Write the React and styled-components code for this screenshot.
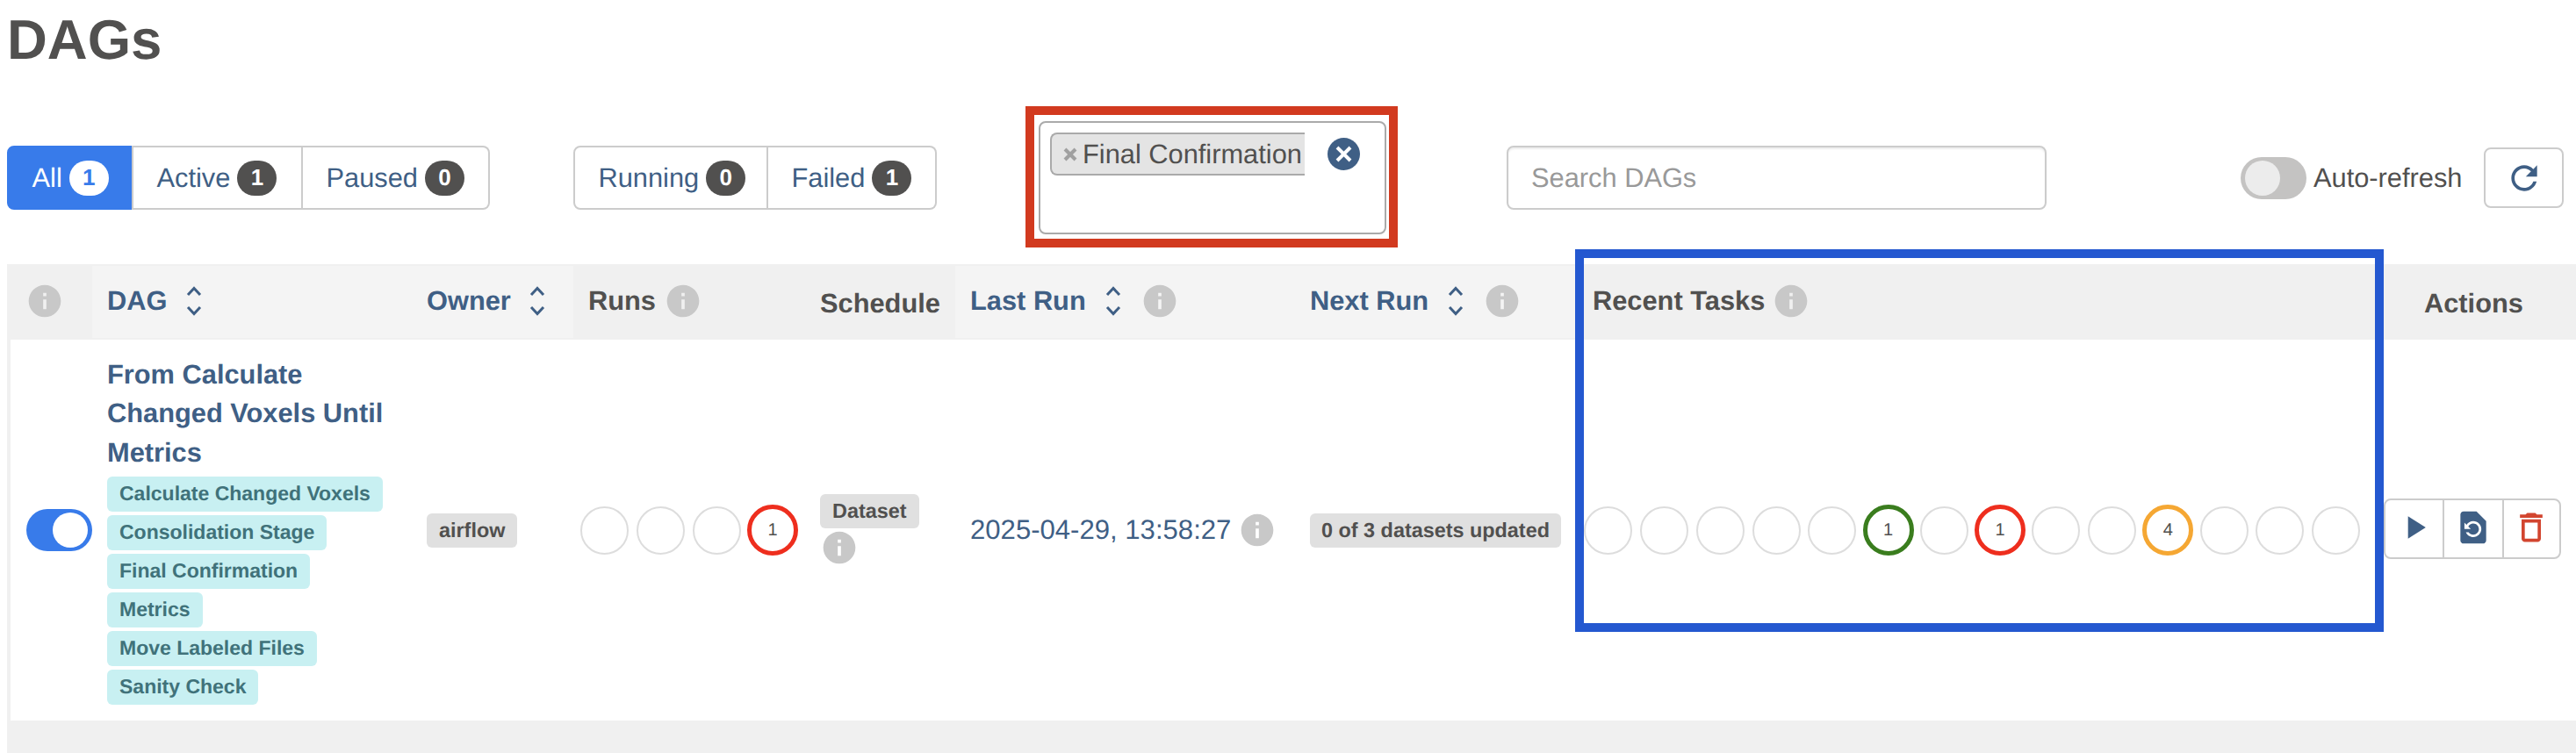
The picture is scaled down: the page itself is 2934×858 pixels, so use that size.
import styled, { createGlobalStyle } from "styled-components";

const INK = "#51504f";
const NAVY = "#3f5f85";
const COLUMNS = "97px 364px 184px 263px 172px 387px 320px 920px 219px";

const GlobalStyle = createGlobalStyle`
  html, body {
    margin: 0;
    background: #fff;
    overflow: hidden;
  }
  * {
    box-sizing: border-box;
  }
`;

const Page = styled.div`
  height: 858px;
  padding-left: 8px;
  overflow: hidden;
  color: ${INK};
  font-family: "Liberation Sans", Arial, sans-serif;
  font-size: 30.8px;
  text-rendering: geometricPrecision;
`;

const Title = styled.h1`
  height: 121px;
  margin: 0;
  padding-top: 14px;
  font-size: 63.5px;
  line-height: 64px;
  font-weight: 700;
`;

const Toolbar = styled.div`
  display: flex;
  align-items: center;
  height: 163px;
  margin-bottom: 17px;
`;

const ButtonGroup = styled.div`
  display: flex;
  height: 73px;
  margin-left: ${(p) => p.$offset || 0}px;
`;

const FilterButton = styled.div`
  display: flex;
  align-items: center;
  gap: 8px;
  width: ${(p) => p.$width}px;
  padding-left: 26.5px;
  color: ${(p) => (p.$active ? "#fff" : NAVY)};
  background: ${(p) => (p.$active ? "#387bea" : "#fff")};
  border: 2px solid ${(p) => (p.$active ? "#387bea" : "#ccc")};
  border-left-width: ${(p) => (p.$first || p.$afterActive ? 2 : 0)}px;
  border-radius: ${(p) => (p.$first ? "8px 0 0 8px" : p.$last ? "0 8px 8px 0" : "0")};
`;

const CountBadge = styled.span`
  display: flex;
  align-items: center;
  justify-content: center;
  width: 45px;
  height: 40px;
  border-radius: 20px;
  font-size: 26px;
  font-weight: 700;
  color: ${(p) => (p.$active ? "#387bea" : "#fff")};
  background: ${(p) => (p.$active ? "#fff" : INK)};
`;

const FilterOutline = styled.div`
  width: 424px;
  height: 161px;
  margin: -2px 0 0 101px;
  padding: 7px 3px 5px 5px;
  border: 10px solid #d23a1f;
`;

const TagSelect = styled.div`
  display: flex;
  align-items: flex-start;
  height: 129px;
  padding: 11px 0 0 11px;
  border: 2px solid #aaa;
  border-radius: 8px;
`;

const SelectedTag = styled.div`
  display: flex;
  align-items: center;
  width: 290px;
  height: 49px;
  padding-left: 13px;
  overflow: hidden;
  white-space: nowrap;
  background: #e4e4e4;
  border: 2px solid #aaa;
  border-right: 0;
  border-radius: 8px 0 0 8px;
`;

const TagRemove = styled.svg`
  flex: none;
  width: 16px;
  height: 16px;
  margin-right: 6px;
  stroke: #a0a0a0;
  stroke-width: 4;
`;

const ClearButton = styled.svg`
  flex: none;
  width: 37px;
  height: 37px;
  margin: 6px 0 0 26px;
`;

const SearchInput = styled.div`
  display: flex;
  align-items: center;
  width: 615px;
  height: 73px;
  margin-left: 124px;
  padding-left: 26px;
  color: #999;
  border: 2px solid #ccc;
  border-radius: 8px;
  box-shadow: inset 0 2px 2px rgba(0, 0, 0, 0.07);
`;

const Switch = styled.div`
  display: flex;
  align-items: center;
  justify-content: ${(p) => (p.$on ? "flex-end" : "flex-start")};
  flex: none;
  width: 75px;
  height: 48px;
  padding: 4px 5px;
  background: ${(p) => (p.$on ? "#387bea" : "#c4c3c2")};
  border-radius: 24px;
`;

const SwitchKnob = styled.span`
  width: 40px;
  height: 40px;
  border-radius: 50%;
  background: ${(p) => (p.$on ? "#fff" : "#ececec")};
`;

const AutoRefresh = styled.div`
  display: flex;
  align-items: center;
  gap: 8px;
  margin-left: 221px;
`;

const RefreshButton = styled.div`
  display: flex;
  align-items: center;
  justify-content: center;
  width: 91px;
  height: 69px;
  margin-left: 25px;
  border: 2px solid #ccc;
  border-radius: 8px;
`;

const TableWrap = styled.div`
  position: relative;
`;

const HeaderRow = styled.div`
  display: grid;
  grid-template-columns: ${COLUMNS};
  height: 86px;
  padding: 2px 0;
  background: #f0f0f0;
`;

const HeaderCell = styled.div`
  display: flex;
  align-items: center;
  padding: ${(p) => (p.$plain ? "4px 0 0" : "0 0 2px")};
  padding-left: ${(p) => p.$left}px;
  font-weight: 700;
  white-space: nowrap;
  color: ${(p) => (p.$sort ? NAVY : INK)};
  background: ${(p) => (p.$light ? "#f4f4f4" : "transparent")};
`;

const SortIcon = styled.svg`
  flex: none;
  width: 18px;
  height: 34px;
  margin-left: ${(p) => p.$gap}px;
  fill: none;
  stroke: ${NAVY};
  stroke-width: 3;
`;

const InfoIcon = styled.svg`
  flex: none;
  display: block;
  width: 44px;
  height: 44px;
  margin-left: ${(p) => p.$gap || 0}px;
  fill: #c8c8c8;
`;

const BodyRow = styled.div`
  display: grid;
  grid-template-columns: ${COLUMNS};
  align-items: center;
  height: 434px;
  background: #fff;
  box-shadow: inset 4px 0 0 #f0f0f0;
`;

const BodyCell = styled.div`
  padding-left: ${(p) => p.$left || 0}px;
`;

const DagName = styled.div`
  width: 330px;
  margin-bottom: 5px;
  font-weight: 700;
  line-height: 44.5px;
  color: ${NAVY};
`;

const TagList = styled.div`
  display: flex;
  flex-direction: column;
  align-items: flex-start;
  gap: 4px;
`;

const DagTag = styled.span`
  height: 40px;
  padding: 0 14px;
  font-size: 23px;
  font-weight: 700;
  line-height: 39px;
  white-space: nowrap;
  color: #40727a;
  background: #c8f0f2;
  border-radius: 6px;
`;

const GreyLabel = styled.span`
  display: inline-block;
  height: 39px;
  padding: 0 ${(p) => p.$pad || 14}px;
  font-size: 23.4px;
  font-weight: 700;
  line-height: 39px;
  white-space: nowrap;
  background: #e0e0e0;
  border-radius: 6px;
`;

const LastRun = styled.div`
  display: flex;
  align-items: center;
  gap: 8px;
  font-size: 31.1px;
  white-space: nowrap;
  color: ${NAVY};
`;

const CircleRow = styled.div`
  display: flex;
`;

const CircleSlot = styled.div`
  display: flex;
  align-items: center;
  justify-content: center;
  flex: none;
  width: 63.75px;
`;

const StateCircle = styled.div`
  display: flex;
  align-items: center;
  justify-content: center;
  width: ${(p) => (p.$color ? 58 : 55)}px;
  height: ${(p) => (p.$color ? 58 : 55)}px;
  font-size: 20px;
  border: ${(p) => (p.$color ? `5px solid ${p.$color}` : "2.5px solid #ddd")};
  border-radius: 50%;
`;

const ActionGroup = styled.div`
  display: flex;
  width: 202px;
  height: 69px;
  margin-top: -4px;
  border: 2px solid #ccc;
  border-radius: 8px;
`;

const ActionButton = styled.div`
  display: flex;
  align-items: center;
  justify-content: center;
  width: ${(p) => p.$width}px;
  padding-bottom: 3px;
  border-left: ${(p) => (p.$divider ? "2px solid #ccc" : "0")};
`;

const ActionIcon = styled.svg`
  display: block;
  width: 44px;
  height: 44px;
  fill: ${(p) => p.$color};
`;

const TableFooter = styled.div`
  height: 37px;
  background: #f0f0f0;
`;

const BlueOutline = styled.div`
  position: absolute;
  top: -17px;
  left: 1786px;
  width: 921px;
  height: 436px;
  border: 10px solid #2458d0;
  pointer-events: none;
`;

const Info = ({ gap }) => (
  <InfoIcon $gap={gap} viewBox="0 0 24 24">
    <path d="M12 2C6.48 2 2 6.48 2 12s4.48 10 10 10 10-4.48 10-10S17.52 2 12 2zm1 15h-2v-6h2v6zm0-8h-2V7h2v2z" />
  </InfoIcon>
);

const Sort = ({ gap }) => (
  <SortIcon $gap={gap} viewBox="0 0 18 34">
    <polyline points="2,10 9,2.5 16,10" />
    <polyline points="2,24 9,31.5 16,24" />
  </SortIcon>
);

const Circles = ({ states }) => (
  <CircleRow>
    {states.map((s, i) => (
      <CircleSlot key={i}>
        <StateCircle $color={s && s.color}>{s && s.count}</StateCircle>
      </CircleSlot>
    ))}
  </CircleRow>
);

const GREEN = "#3a7d1e";
const RED = "#ee2e1e";
const ORANGE = "#f5a733";

const runStates = [null, null, null, { color: RED, count: 1 }];
const taskStates = [
  null, null, null, null, null,
  { color: GREEN, count: 1 },
  null,
  { color: RED, count: 1 },
  null, null,
  { color: ORANGE, count: 4 },
  null, null, null,
];

const dagTags = [
  "Calculate Changed Voxels",
  "Consolidation Stage",
  "Final Confirmation",
  "Metrics",
  "Move Labeled Files",
  "Sanity Check",
];

export default function App() {
  return (
    <Page>
      <GlobalStyle />
      <Title>DAGs</Title>

      <Toolbar>
        <ButtonGroup>
          <FilterButton $active $first $width={142}>
            All <CountBadge $active>1</CountBadge>
          </FilterButton>
          <FilterButton $afterActive $width={195}>
            Active <CountBadge>1</CountBadge>
          </FilterButton>
          <FilterButton $last $width={213}>
            Paused <CountBadge>0</CountBadge>
          </FilterButton>
        </ButtonGroup>

        <ButtonGroup $offset={95}>
          <FilterButton $first $width={222}>
            Running <CountBadge>0</CountBadge>
          </FilterButton>
          <FilterButton $last $width={192}>
            Failed <CountBadge>1</CountBadge>
          </FilterButton>
        </ButtonGroup>

        <FilterOutline>
          <TagSelect>
            <SelectedTag>
              <TagRemove viewBox="0 0 16 16">
                <line x1="2" y1="2" x2="14" y2="14" />
                <line x1="14" y1="2" x2="2" y2="14" />
              </TagRemove>
              Final Confirmation
            </SelectedTag>
            <ClearButton viewBox="0 0 37 37">
              <circle cx="18.5" cy="18.5" r="18.5" fill={NAVY} />
              <path d="M11 11l15 15M26 11l-15 15" stroke="#fff" strokeWidth="4" />
            </ClearButton>
          </TagSelect>
        </FilterOutline>

        <SearchInput>Search DAGs</SearchInput>

        <AutoRefresh>
          <Switch>
            <SwitchKnob />
          </Switch>
          Auto-refresh
        </AutoRefresh>

        <RefreshButton>
          <ActionIcon $color={NAVY} viewBox="0 0 24 24">
            <path d="M17.65 6.35C16.2 4.9 14.21 4 12 4c-4.42 0-7.99 3.58-7.99 8s3.57 8 7.99 8c3.73 0 6.84-2.55 7.73-6h-2.08c-.82 2.33-3.04 4-5.65 4-3.31 0-6-2.69-6-6s2.69-6 6-6c1.66 0 3.14.69 4.22 1.78L13 11h7V4l-2.35 2.35z" />
          </ActionIcon>
        </RefreshButton>
      </Toolbar>

      <TableWrap>
        <HeaderRow>
          <HeaderCell $left={21}>
            <Info />
          </HeaderCell>
          <HeaderCell $left={17} $light $sort>
            DAG
            <Sort gap={22} />
          </HeaderCell>
          <HeaderCell $left={17} $light $sort>
            Owner
            <Sort gap={21} />
          </HeaderCell>
          <HeaderCell $left={17}>
            Runs
            <Info gap={9} />
          </HeaderCell>
          <HeaderCell $left={18} $plain>
            Schedule
          </HeaderCell>
          <HeaderCell $left={17} $light $sort>
            Last Run
            <Sort gap={22} />
            <Info gap={22} />
          </HeaderCell>
          <HeaderCell $left={17} $light $sort>
            Next Run
            <Sort gap={22} />
            <Info gap={22} />
          </HeaderCell>
          <HeaderCell $left={19}>
            Recent Tasks
            <Info gap={8} />
          </HeaderCell>
          <HeaderCell $left={46} $plain>
            Actions
          </HeaderCell>
        </HeaderRow>

        <BodyRow>
          <BodyCell $left={22}>
            <Switch $on>
              <SwitchKnob $on />
            </Switch>
          </BodyCell>
          <BodyCell $left={17}>
            <DagName>From Calculate Changed Voxels Until Metrics</DagName>
            <TagList>
              {dagTags.map((tag) => (
                <DagTag key={tag}>{tag}</DagTag>
              ))}
            </TagList>
          </BodyCell>
          <BodyCell $left={17}>
            <GreyLabel>airflow</GreyLabel>
          </BodyCell>
          <BodyCell $left={4}>
            <Circles states={runStates} />
          </BodyCell>
          <BodyCell $left={18}>
            <GreyLabel>Dataset</GreyLabel>
            <Info />
          </BodyCell>
          <BodyCell $left={17}>
            <LastRun>
              2025-04-29, 13:58:27
              <Info />
            </LastRun>
          </BodyCell>
          <BodyCell $left={17}>
            <GreyLabel $pad={13}>0 of 3 datasets updated</GreyLabel>
          </BodyCell>
          <BodyCell $left={5}>
            <Circles states={taskStates} />
          </BodyCell>
          <BodyCell>
            <ActionGroup>
              <ActionButton $width={66}>
                <ActionIcon $color={NAVY} viewBox="0 0 24 24">
                  <path d="M8 5v14l11-7z" />
                </ActionIcon>
              </ActionButton>
              <ActionButton $divider $width={68}>
                <ActionIcon $color={NAVY} viewBox="0 0 24 24">
                  <path d="M14 2H6c-1.1 0-1.99.9-1.99 2L4 20c0 1.1.89 2 1.99 2H18c1.1 0 2-.9 2-2V8l-6-6zm-2 16c-2.05 0-3.81-1.24-4.58-3h1.71c.63.9 1.68 1.5 2.87 1.5 1.93 0 3.5-1.57 3.5-3.5S13.93 9.5 12 9.5c-1.35 0-2.52.78-3.1 1.9l1.6 1.6h-4V9l1.3 1.3C8.69 8.92 10.23 8 12 8c2.76 0 5 2.24 5 5s-2.24 5-5 5z" />
                </ActionIcon>
              </ActionButton>
              <ActionButton $divider $width={66}>
                <ActionIcon $color="#d2452f" viewBox="0 0 24 24">
                  <path d="M6 19c0 1.1.9 2 2 2h8c1.1 0 2-.9 2-2V7H6v12zM8 9h8v10H8V9zm7.5-5l-1-1h-5l-1 1H5v2h14V4h-3.5z" />
                </ActionIcon>
              </ActionButton>
            </ActionGroup>
          </BodyCell>
        </BodyRow>

        <TableFooter />
        <BlueOutline />
      </TableWrap>
    </Page>
  );
}
